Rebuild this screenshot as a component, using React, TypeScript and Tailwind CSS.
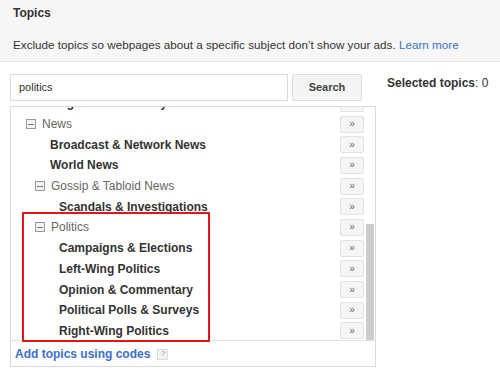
import React from "react";

type Row = { label: string; level: number; parent?: boolean };

const rows: Row[] = [
  { label: "Magazines & Weekly", level: 1 },
  { label: "News", level: 0, parent: true },
  { label: "Broadcast & Network News", level: 1 },
  { label: "World News", level: 1 },
  { label: "Gossip & Tabloid News", level: 1, parent: true },
  { label: "Scandals & Investigations", level: 2 },
  { label: "Politics", level: 1, parent: true },
  { label: "Campaigns & Elections", level: 2 },
  { label: "Left-Wing Politics", level: 2 },
  { label: "Opinion & Commentary", level: 2 },
  { label: "Political Polls & Surveys", level: 2 },
  { label: "Right-Wing Politics", level: 2 },
];

function MinusBox() {
  return (
    <span className="mr-[6px] inline-flex h-[10px] w-[10px] items-center justify-center border border-[#9a9a9a] bg-[#f4f4f4]">
      <span className="block h-[1px] w-[6px] bg-[#777]" />
    </span>
  );
}

function RowItem({ row }: { row: Row }) {
  const padParent = row.level === 0 ? "pl-[15px]" : "pl-[24px]";
  const padLeaf = row.level === 1 ? "pl-[39px]" : "pl-[48px]";
  return (
    <div className="flex h-[20.7px] items-center pr-[11px]">
      {row.parent ? (
        <div className={`flex flex-1 items-center ${padParent} text-[12px] text-[#666]`}>
          <MinusBox />
          <span>{row.label}</span>
        </div>
      ) : (
        <div className={`flex-1 ${padLeaf} text-[12px] font-bold text-[#333]`}>{row.label}</div>
      )}
      <div className="flex h-[17px] w-[24px] items-center justify-center rounded-[2px] border border-[#e2e2e2] bg-[#f5f5f5] text-[10px] leading-none text-[#666]">
        »
      </div>
    </div>
  );
}

export default function App() {
  return (
    <div
      className="relative h-[371px] w-[500px] overflow-hidden bg-white text-[#333]"
      style={{ fontFamily: '"Liberation Sans", Arial, sans-serif' }}
    >
      <div className="h-[62px] border-b border-[#e6e6e6] bg-[#f7f7f7] pl-[13px]">
        <div className="pt-[5px] text-[12px] font-bold leading-[16px] text-[#333]">Topics</div>
        <div className="pt-[16px] text-[11.7px] leading-[16px] text-[#333]">
          Exclude topics so webpages about a specific subject don’t show your ads.{" "}
          <span className="text-[#3b6fd1]">Learn more</span>
        </div>
      </div>

      <div className="flex pl-[10px] pt-[12px]">
        <div className="w-[366px]">
          <div className="flex h-[27px] gap-[4px]">
            <div className="flex h-[27px] w-[278px] items-center border border-[#dcdcdc] bg-white pl-[8px] text-[11px] text-[#333]">
              politics
            </div>
            <div className="flex h-[27px] w-[70px] items-center justify-center rounded-[2px] border border-[#dcdcdc] bg-[#f5f5f5] text-[11px] font-bold text-[#444]">
              Search
            </div>
          </div>
          <div className="mt-[5px] h-[261px] w-[366px] border border-[#dcdcdc] bg-white">
            <div className="relative h-[234px] overflow-hidden border-b border-[#e2e2e2]">
              <div className="mt-[-14px]">
                {rows.map((r, i) => (
                  <RowItem key={i} row={r} />
                ))}
              </div>
              <div className="absolute right-[1px] top-[117px] h-[118px] w-[8px] bg-[#cdcdcd]" />
            </div>
            <div className="flex h-[24px] items-center pl-[4px] pt-[2px]">
              <span className="text-[12px] font-bold text-[#3b6fd1]">Add topics using codes</span>
              <span className="ml-[7px] flex h-[11px] w-[11px] items-center justify-center border border-[#ddd] bg-[#f3f3f3] text-[8px] leading-none text-[#999]">
                ?
              </span>
            </div>
          </div>
        </div>
        <div className="pl-[11px] pt-[1px] text-[12px] leading-[16px] text-[#333]">
          <span className="font-bold">Selected topics</span>: 0
        </div>
      </div>

      <div className="absolute left-[22px] top-[212px] h-[130px] w-[188px] border-2 border-[#e0161b]" />
    </div>
  );
}
